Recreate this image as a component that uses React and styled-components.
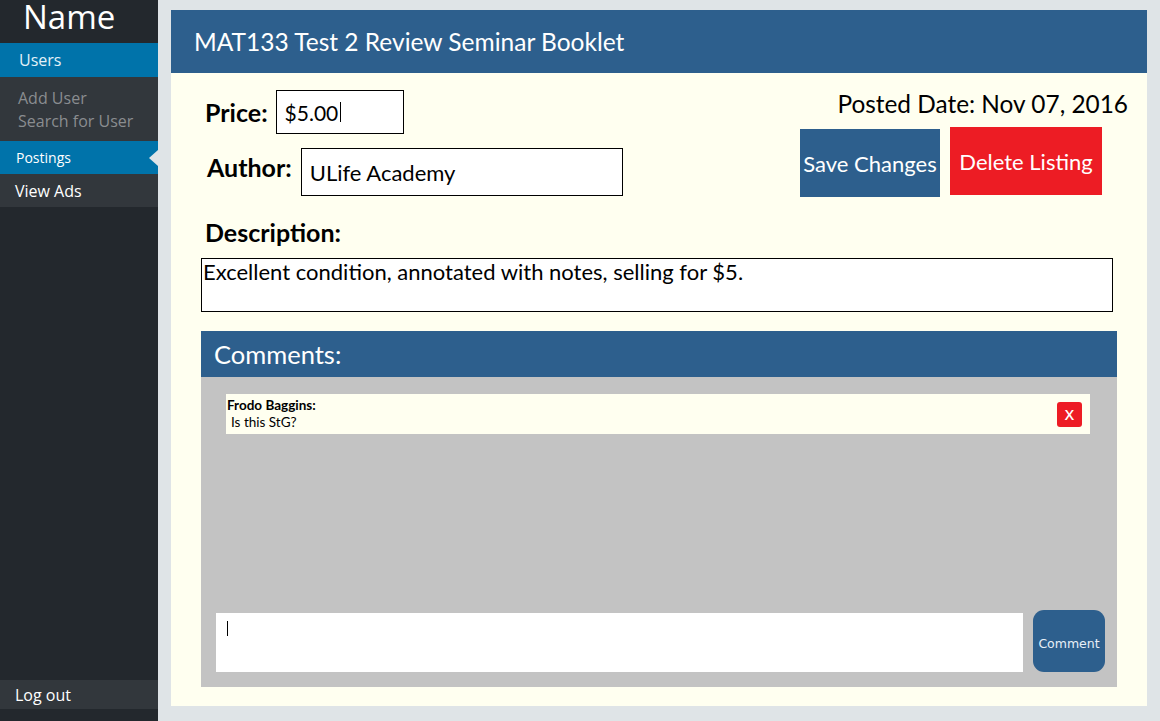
import React from "react";
import styled, { createGlobalStyle } from "styled-components";

const GlobalStyle = createGlobalStyle`
  html, body {
    margin: 0;
    padding: 0;
    background: #dfe4e7;
  }
  * {
    box-sizing: border-box;
  }
`;

const Page = styled.div`
  display: flex;
  width: 1160px;
  height: 721px;
  overflow: hidden;
  background: #dfe4e7;
`;

const Sidebar = styled.nav`
  width: 158px;
  flex: none;
  display: flex;
  flex-direction: column;
  background: #23282d;
  font-family: "Open Sans", "Noto Sans", sans-serif;
`;

const Brand = styled.div`
  height: 43px;
  padding-left: 23px;
  color: #fff;
  font-size: 33px;
  line-height: 34px;
`;

const MenuItem = styled.div`
  position: relative;
  display: flex;
  align-items: center;
  height: ${(p) => p.h || 33}px;
  padding-left: ${(p) => p.pad || 15}px;
  background: ${(p) => (p.active ? "#0073aa" : "#32373c")};
  color: ${(p) => p.color || "#fff"};
  font-size: ${(p) => p.size || 16}px;
`;

const SubMenu = styled.div`
  background: #32373c;
  padding: 10px 0 8px 18px;
  color: #8a8d90;
  font-size: 16px;
  line-height: 23px;
`;

const Arrow = styled.span`
  position: absolute;
  right: 0;
  top: 50%;
  margin-top: -8px;
  border-style: solid;
  border-width: 8px 9px 8px 0;
  border-color: transparent #dfe4e7 transparent transparent;
`;

const Spacer = styled.div`
  flex: 1;
`;

const LogoutWrap = styled.div`
  padding-bottom: 12px;
`;

const Main = styled.main`
  flex: 1;
  padding: 10px 13px 15px 13px;
`;

const Panel = styled.section`
  height: 696px;
  background: #fffff0;
  display: flex;
  flex-direction: column;
  font-family: "Lato", "Open Sans", sans-serif;
  color: #000;
`;

const TitleBar = styled.header`
  height: 63px;
  background: #2d5f8d;
  color: #fff;
  font-size: 24.5px;
  padding-left: 23px;
  display: flex;
  align-items: center;
`;

const Body = styled.div`
  flex: 1;
  display: flex;
  flex-direction: column;
  padding: 17px 30px 19px 30px;
`;

const TopRow = styled.div`
  display: flex;
  justify-content: space-between;
`;

const Fields = styled.div`
  display: flex;
  flex-direction: column;
  gap: 14px;
`;

const FieldRow = styled.div`
  display: flex;
  align-items: center;
  padding-left: ${(p) => p.indent || 4}px;
`;

const Label = styled.span`
  font-weight: 700;
  font-size: 25px;
  margin-right: ${(p) => p.gap || 8}px;
  margin-bottom: ${(p) => p.lift || 0}px;
`;

const Input = styled.div`
  width: ${(p) => p.w}px;
  height: ${(p) => p.h}px;
  border: 1px solid #000;
  background: #fff;
  font-size: ${(p) => p.size || 22}px;
  padding-left: 8px;
  display: flex;
  align-items: center;
`;

const Caret = styled.span`
  display: inline-block;
  width: 1px;
  height: ${(p) => p.h || 20}px;
  background: #000;
  margin-left: 2px;
`;

const Actions = styled.div`
  display: flex;
  flex-direction: column;
  align-items: flex-end;
`;

const PostedDate = styled.div`
  font-size: 24.4px;
  line-height: 28px;
  margin-right: -11px;
`;

const ButtonRow = styled.div`
  display: flex;
  align-items: flex-start;
  gap: 10px;
  margin-right: 15px;
  margin-top: 9px;
`;

const ActionButton = styled.div`
  width: ${(p) => p.w}px;
  height: 68px;
  margin-top: ${(p) => p.offset || 0}px;
  background: ${(p) => p.bg};
  color: #fff;
  font-size: 22px;
  white-space: nowrap;
  display: flex;
  align-items: center;
  justify-content: center;
`;

const DescLabel = styled.div`
  font-weight: 700;
  font-size: 25px;
  line-height: 30px;
  margin: 20px 0 11px 4px;
`;

const DescBox = styled.div`
  width: 912px;
  height: 54px;
  border: 1px solid #000;
  background: #fff;
  font-size: 22px;
  line-height: 26px;
  padding: 0 0 0 1px;
`;

const Comments = styled.div`
  margin-top: 19px;
  flex: 1;
  display: flex;
  flex-direction: column;
  background: #c3c3c3;
`;

const CommentsHeader = styled.div`
  height: 46px;
  background: #2d5f8d;
  color: #fff;
  font-size: 25.5px;
  padding-left: 13px;
  display: flex;
  align-items: center;
`;

const CommentsBody = styled.div`
  flex: 1;
  display: flex;
  flex-direction: column;
  justify-content: space-between;
  padding: 17px 12px 15px 15px;
`;

const CommentItem = styled.div`
  margin-left: 10px;
  width: 864px;
  height: 40px;
  background: #fffff0;
  display: flex;
  align-items: center;
  justify-content: space-between;
  padding: 0 8px 0 1px;
  font-size: 13.5px;
`;

const Author = styled.div`
  font-weight: 700;
  line-height: 17px;
`;

const CommentText = styled.div`
  padding-left: 4px;
  line-height: 17px;
`;

const RemoveButton = styled.div`
  width: 25px;
  height: 25px;
  border-radius: 3px;
  background: #ed1c24;
  color: #fff;
  font-family: "Open Sans", sans-serif;
  font-weight: 600;
  font-size: 15px;
  display: flex;
  align-items: center;
  justify-content: center;
`;

const Composer = styled.div`
  display: flex;
  align-items: flex-end;
  gap: 10px;
`;

const TextArea = styled.div`
  width: 807px;
  height: 59px;
  background: #fff;
  padding: 7px 0 0 9px;
`;

const CommentButton = styled.div`
  width: 72px;
  height: 62px;
  border-radius: 11px;
  background: #2d5f8d;
  color: #e8f0f8;
  font-family: "DejaVu Sans", "Verdana", sans-serif;
  font-size: 12.5px;
  padding-top: 5px;
  display: flex;
  align-items: center;
  justify-content: center;
`;

export default function App() {
  return (
    <>
      <GlobalStyle />
      <Page>
        <Sidebar>
          <Brand>Name</Brand>
          <MenuItem active h={34} pad={19} color="#e3f1f8">
            Users
          </MenuItem>
          <SubMenu>
            <div>Add User</div>
            <div>Search for User</div>
          </SubMenu>
          <MenuItem active pad={16} size={14}>
            Postings
            <Arrow />
          </MenuItem>
          <MenuItem>View Ads</MenuItem>
          <Spacer />
          <LogoutWrap>
            <MenuItem h={29}>Log out</MenuItem>
          </LogoutWrap>
        </Sidebar>
        <Main>
          <Panel>
            <TitleBar>MAT133 Test 2 Review Seminar Booklet</TitleBar>
            <Body>
              <TopRow>
                <Fields>
                  <FieldRow>
                    <Label gap={8}>Price:</Label>
                    <Input w={128} h={44} size={21}>
                      $5.00
                      <Caret />
                    </Input>
                  </FieldRow>
                  <FieldRow indent={6}>
                    <Label gap={9} lift={10}>
                      Author:
                    </Label>
                    <Input w={322} h={48}>
                      ULife Academy
                    </Input>
                  </FieldRow>
                </Fields>
                <Actions>
                  <PostedDate>Posted Date: Nov 07, 2016</PostedDate>
                  <ButtonRow>
                    <ActionButton bg="#2d5f8d" offset={2} w={140}>
                      Save Changes
                    </ActionButton>
                    <ActionButton bg="#ed1c24" w={152}>
                      Delete Listing
                    </ActionButton>
                  </ButtonRow>
                </Actions>
              </TopRow>
              <DescLabel>Description:</DescLabel>
              <DescBox>
                Excellent condition, annotated with notes, selling for $5.
              </DescBox>
              <Comments>
                <CommentsHeader>Comments:</CommentsHeader>
                <CommentsBody>
                  <CommentItem>
                    <div>
                      <Author>Frodo Baggins:</Author>
                      <CommentText>Is this StG?</CommentText>
                    </div>
                    <RemoveButton>X</RemoveButton>
                  </CommentItem>
                  <Composer>
                    <TextArea>
                      <Caret h={15} />
                    </TextArea>
                    <CommentButton>Comment</CommentButton>
                  </Composer>
                </CommentsBody>
              </Comments>
            </Body>
          </Panel>
        </Main>
      </Page>
    </>
  );
}
